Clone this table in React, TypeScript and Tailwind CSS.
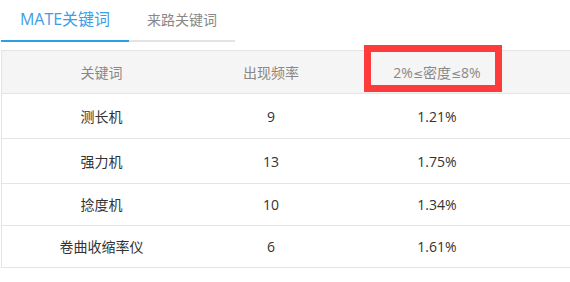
const rows = [
  { keyword: "测长机", count: 9, density: "1.21%", h: "h-[45px]" },
  { keyword: "强力机", count: 13, density: "1.75%", h: "h-[45px]" },
  { keyword: "捻度机", count: 10, density: "1.34%", h: "h-[42px]" },
  { keyword: "卷曲收缩率仪", count: 6, density: "1.61%", h: "h-[42px]" },
];

const Le = () => <span className="font-['DejaVu_Sans'] text-[12px]">≤</span>;

export default function App() {
  return (
    <div
      className="relative w-[570px] h-[282px] overflow-hidden bg-white pl-[1px]"
      style={{ fontFamily: '"Open Sans", "Noto Sans CJK SC", sans-serif' }}
    >
      {/* Tabs */}
      <div className="flex w-[234px] h-[42px]">
        <div className="w-[128px] flex items-center justify-center border-b-2 border-[#2a9fe6] pb-[2px] text-[16px] text-[#3d9de6]">
          MATE关键词
        </div>
        <div className="flex-1 flex items-center justify-center border-b-2 border-[#e3e3e3] pb-[2px] text-[14px] text-[#888]">
          来路关键词
        </div>
      </div>

      {/* Table */}
      <div className="mt-[8px] border-l border-t border-[#e4e4e4] w-[600px]">
        <div className="grid grid-cols-[199px_140px_192px_1fr] h-[43px] bg-[#f5f5f5] border-b border-[#e4e4e4] text-[14px] text-[#888] items-center text-center">
          <div>关键词</div>
          <div>出现频率</div>
          <div>
            2%<Le />密度<Le />8%
          </div>
          <div />
        </div>
        {rows.map((r) => (
          <div
            key={r.keyword}
            className={`grid grid-cols-[199px_140px_192px_1fr] ${r.h} border-b border-[#e4e4e4] text-[14px] text-[#333] items-center text-center`}
          >
            <div>{r.keyword}</div>
            <div>{r.count}</div>
            <div>{r.density}</div>
            <div />
          </div>
        ))}
      </div>

      {/* Red highlight box */}
      <div className="absolute left-[364px] top-[45px] w-[138px] h-[47px] border-[7px] border-[#fd3b3b]" />
    </div>
  );
}
